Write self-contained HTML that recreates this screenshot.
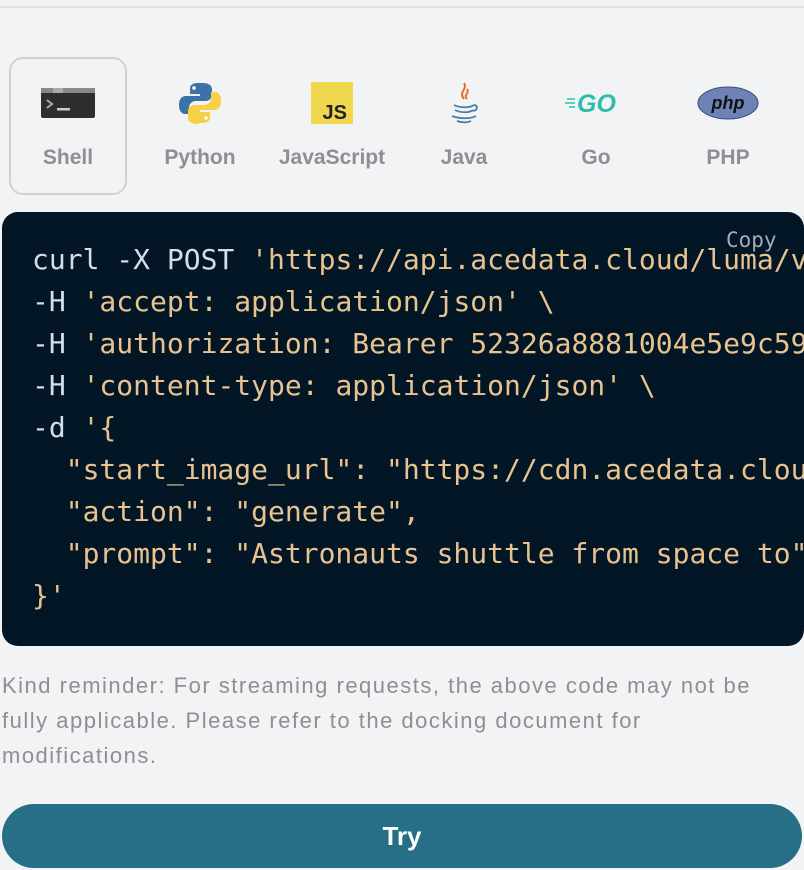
<!DOCTYPE html>
<html><head><meta charset="utf-8"><style>
html,body{margin:0;padding:0;background:#f2f3f5;width:804px;height:870px;overflow:hidden;font-family:"Liberation Sans",sans-serif;}
.line{position:absolute;left:0;top:6px;width:804px;height:2px;background:#dfe0e4;}
.tab{position:absolute;top:57px;width:118px;height:138px;box-sizing:border-box;text-align:center;border:2px solid transparent;}
.tab.sel{border:2px solid #d0d1d4;border-radius:14px;}
.tab .ic{position:absolute;left:0;right:0;top:22px;height:44px;display:flex;justify-content:center;align-items:center;}
.tab .lb{position:absolute;left:-20px;right:-20px;top:87px;font-size:21px;font-weight:bold;color:#8e8e93;}
.code{position:absolute;left:2px;top:212px;width:802px;height:434px;background:#021626;border-radius:16px;overflow:hidden;}
pre{margin:0;position:absolute;left:30px;top:27px;font-family:"DejaVu Sans Mono","Liberation Mono",monospace;font-size:28px;line-height:42px;color:#e8c28f;white-space:pre;}
.w{color:#d5dde8}
.copy{position:absolute;left:724px;top:16px;font-family:"DejaVu Sans Mono",monospace;font-size:21px;color:#a3adb8;}
.rem{position:absolute;left:2px;top:668px;width:790px;font-size:22px;line-height:35px;color:#8e8e93;letter-spacing:1.5px;}
.try{position:absolute;left:2px;top:804px;width:800px;height:64px;background:#276f86;border-radius:32px;color:#fff;font-size:26px;font-weight:bold;text-align:center;line-height:64px;}
</style></head><body>
<div class="line"></div>
<div class="tab sel" style="left:9px"><div class="ic"><svg width="54" height="30" viewBox="0 0 54 30"><rect width="54" height="30" rx="2" fill="#2e2e2e"/><rect width="54" height="5" fill="#888"/><rect x="12" width="10" height="5" fill="#aaa"/><path d="M6 12l5 4-5 4" stroke="#aaa" stroke-width="2" fill="none"/><rect x="16" y="20" width="13" height="2.5" fill="#ccc"/></svg></div><div class="lb">Shell</div></div>
<div class="tab" style="left:141px"><div class="ic"><svg width="44" height="44" viewBox="0 0 44 44"><path d="M21 2c-9 0-9 4-9 6v5h10v2H8c-5 0-7 4-7 9s2 9 6 9h4v-6c0-4 3-7 7-7h10c3 0 6-3 6-6V8c0-3-3-6-9-6z" fill="#3b73a8"/><path d="M23 42c9 0 9-4 9-6v-5H22v-2h14c5 0 7-4 7-9s-2-9-6-9h-4v6c0 4-3 7-7 7H16c-3 0-6 3-6 6v7c0 3 3 6 9 6z" fill="#f8d045"/><circle cx="16" cy="7" r="1.8" fill="#fff"/><circle cx="28" cy="37" r="1.8" fill="#fff"/></svg></div><div class="lb">Python</div></div>
<div class="tab" style="left:273px"><div class="ic"><svg width="42" height="42" viewBox="0 0 42 42"><rect width="42" height="42" fill="#efd84f"/><text x="36" y="37" text-anchor="end" font-family="Liberation Sans" font-weight="bold" font-size="20" fill="#222">JS</text></svg></div><div class="lb">JavaScript</div></div>
<div class="tab" style="left:405px"><div class="ic"><svg width="34" height="44" viewBox="0 0 34 44"><path d="M17 2c4 6-6 9 0 16M20 8c3 4-4 6 0 10" stroke="#e76f1e" stroke-width="2" fill="none"/><path d="M7 24c6 3 16 3 20 0M8 29c6 3 14 3 18 0M5 35c8 3 18 3 24 0M10 40c6 2 10 2 14 0M27 24c4 0 4 5-1 6" stroke="#4a7ca8" stroke-width="1.8" fill="none"/></svg></div><div class="lb">Java</div></div>
<div class="tab" style="left:537px"><div class="ic"><svg width="62" height="26" viewBox="0 0 62 26"><path d="M2 9h8M0 13h10M4 17h6" stroke="#2dbcaf" stroke-width="1.5"/><text x="12" y="22" font-family="Liberation Sans" font-style="italic" font-weight="bold" font-size="25" fill="#2dbcaf">GO</text></svg></div><div class="lb">Go</div></div>
<div class="tab" style="left:669px"><div class="ic"><svg width="62" height="34" viewBox="0 0 62 34"><ellipse cx="31" cy="17" rx="30" ry="16" fill="#6e82b6" stroke="#3d4a78"/><text x="31" y="23" text-anchor="middle" font-family="Liberation Sans" font-style="italic" font-weight="bold" font-size="18" fill="#111">php</text></svg></div><div class="lb">PHP</div></div>
<div class="code"><pre><span class="w">curl -X POST </span>'https://api.acedata.cloud/luma/videos' \
<span class="w">-H </span>'accept: application/json' \
<span class="w">-H </span>'authorization: Bearer 52326a8881004e5e9c59' \
<span class="w">-H </span>'content-type: application/json' \
<span class="w">-d </span>'{
  "start_image_url": "https://cdn.acedata.cloud/",
  "action": "generate",
  "prompt": "Astronauts shuttle from space to"
}'</pre><div class="copy">Copy</div></div>
<div class="rem">Kind reminder: For streaming requests, the above code may not be<br>fully applicable. Please refer to the docking document for<br>modifications.</div>
<div class="try">Try</div>
</body></html>
